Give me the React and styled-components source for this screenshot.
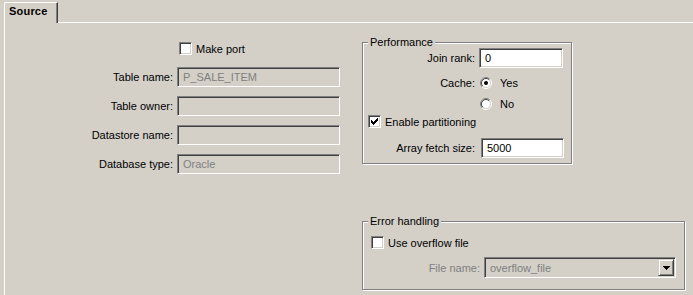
import React from "react";
import styled, { createGlobalStyle } from "styled-components";

const GlobalStyle = createGlobalStyle`
  html, body {
    margin: 0;
    padding: 0;
    background: #d4d0c8;
  }
  body {
    font-family: "Liberation Sans", Arial, sans-serif;
    font-size: 11px;
    color: #000;
  }
`;

const Window = styled.div`
  width: 693px;
  height: 295px;
  overflow: hidden;
  background: #d4d0c8;
  display: flex;
  flex-direction: column;
`;

const TabStrip = styled.div`
  display: flex;
  align-items: flex-end;
  height: 23px;
  flex-shrink: 0;
`;

const TabLead = styled.div`
  width: 4px;
`;

const Tab = styled.div`
  box-sizing: border-box;
  width: 54px;
  height: 21px;
  padding: 2px 0 0 4px;
  line-height: 13px;
  border-left: 1px solid #fff;
  border-top: 1px solid #fff;
  border-right: 1px solid #404040;
  border-top-left-radius: 2px;
  box-shadow: inset -1px 0 #808080;
  font-weight: bold;
  letter-spacing: 0.2px;
`;

const TabFiller = styled.div`
  flex: 1;
  height: 23px;
  box-sizing: border-box;
  border-bottom: 1px solid #fff;
`;

const Panel = styled.div`
  flex: 1;
  margin-left: 4px;
  border-left: 1px solid #fff;
  display: flex;
  align-items: flex-start;
  padding-top: 19px;
`;

const LeftCol = styled.div`
  display: flex;
  flex-direction: column;
  width: 336px;
`;

const RightCol = styled.div`
  display: flex;
  flex-direction: column;
  margin-left: 21px;
`;

const Row = styled.div`
  display: flex;
  align-items: center;
  height: ${(p) => p.$h || 20}px;
  margin-top: ${(p) => p.$mt || 0}px;
  padding-left: ${(p) => p.$pl || 0}px;
`;

const Label = styled.span`
  width: ${(p) => p.$w}px;
  flex-shrink: 0;
  text-align: right;
  margin-right: 4px;
  white-space: nowrap;
  color: ${(p) => (p.$disabled ? "#808080" : "#000")};
`;

const TextBox = styled.div`
  box-sizing: border-box;
  width: ${(p) => p.$w}px;
  height: 20px;
  margin-left: ${(p) => p.$ml || 0}px;
  padding-left: 5px;
  display: flex;
  align-items: center;
  border: 1px solid;
  border-color: #808080 #fff #fff #808080;
  box-shadow: inset 1px 1px #404040, inset -1px -1px #d4d0c8;
  background: ${(p) => (p.$disabled ? "#d4d0c8" : "#fff")};
  color: ${(p) => (p.$disabled ? "#808080" : "#000")};
  white-space: nowrap;
`;

const CheckBox = styled.div`
  box-sizing: border-box;
  width: 13px;
  height: 13px;
  flex-shrink: 0;
  border: 1px solid;
  border-color: #808080 #fff #fff #808080;
  box-shadow: inset 1px 1px #404040, inset -1px -1px #d4d0c8;
  background: #fff;
  display: flex;
  align-items: flex-start;
  justify-content: flex-start;
  padding: 2px 0 0 2px;
  margin-right: 4px;
`;

const RadioWrap = styled.span`
  display: inline-flex;
  align-items: center;
  margin-left: ${(p) => p.$ml || 0}px;
  svg {
    margin-right: 8px;
    flex-shrink: 0;
  }
`;

const Group = styled.div`
  position: relative;
  box-sizing: border-box;
  width: ${(p) => p.$w}px;
  height: ${(p) => p.$h}px;
  margin-top: ${(p) => p.$mt || 0}px;
  border: 1px solid #808080;
  box-shadow: inset 1px 1px #fff, 1px 1px #fff;
  padding-top: ${(p) => p.$pt || 0}px;
`;

const Legend = styled.span`
  position: absolute;
  top: -7px;
  left: 5px;
  padding: 0 2px;
  line-height: 13px;
  background: #d4d0c8;
`;

const Combo = styled.div`
  box-sizing: border-box;
  width: 192px;
  height: 21px;
  display: flex;
  align-items: center;
  padding: 1px 1px 1px 5px;
  border: 1px solid;
  border-color: #808080 #fff #fff #808080;
  box-shadow: inset 1px 1px #404040, inset -1px -1px #d4d0c8;
  background: #d4d0c8;
  color: #808080;
`;

const ComboText = styled.span`
  flex: 1;
`;

const ComboButton = styled.div`
  box-sizing: border-box;
  width: 16px;
  height: 17px;
  display: flex;
  align-items: center;
  justify-content: center;
  border: 1px solid;
  border-color: #d4d0c8 #404040 #404040 #d4d0c8;
  box-shadow: inset 1px 1px #fff, inset -1px -1px #808080;
`;

const CheckMark = () => (
  <svg width="7" height="7" viewBox="0 0 7 7" shapeRendering="crispEdges">
    {[2, 3, 4, 3, 2, 1, 0].map((top, i) => (
      <rect key={i} x={i} y={top} width="1" height="3" fill="#000" />
    ))}
  </svg>
);

const Check = ({ checked, children }) => (
  <>
    <CheckBox>{checked && <CheckMark />}</CheckBox>
    <span>{children}</span>
  </>
);

const Radio = ({ checked, children, ml }) => (
  <RadioWrap $ml={ml}>
    <svg width="12" height="12" viewBox="0 0 12 12">
      <circle cx="6" cy="6" r="5" fill="#fff" />
      <path d="M9.9 2.1 A5.5 5.5 0 0 0 2.1 9.9" stroke="#808080" fill="none" />
      <path d="M2.1 9.9 A5.5 5.5 0 0 0 9.9 2.1" stroke="#fff" fill="none" />
      <path d="M9.2 2.8 A4.5 4.5 0 0 0 2.8 9.2" stroke="#404040" fill="none" />
      <path d="M2.8 9.2 A4.5 4.5 0 0 0 9.2 2.8" stroke="#d4d0c8" fill="none" />
      {checked && <circle cx="6" cy="6" r="2" fill="#000" />}
    </svg>
    <span>{children}</span>
  </RadioWrap>
);

const ArrowDown = () => (
  <svg width="7" height="4" viewBox="0 0 7 4" shapeRendering="crispEdges">
    <rect x="0" y="0" width="7" height="1" fill="#000" />
    <rect x="1" y="1" width="5" height="1" fill="#000" />
    <rect x="2" y="2" width="3" height="1" fill="#000" />
    <rect x="3" y="3" width="1" height="1" fill="#000" />
  </svg>
);

const sourceFields = [
  { label: "Table name:", value: "P_SALE_ITEM" },
  { label: "Table owner:", value: "" },
  { label: "Datastore name:", value: "" },
  { label: "Database type:", value: "Oracle" },
];

export default function App() {
  return (
    <Window>
      <GlobalStyle />
      <TabStrip>
        <TabLead />
        <Tab>Source</Tab>
        <TabFiller />
      </TabStrip>
      <Panel>
        <LeftCol>
          <Row $h={13} $pl={174}>
            <Check>Make port</Check>
          </Row>
          {sourceFields.map((f, i) => (
            <Row key={f.label} $mt={i === 0 ? 12 : 9}>
              <Label $w={168}>{f.label}</Label>
              <TextBox $w={163} $disabled>
                {f.value}
              </TextBox>
            </Row>
          ))}
        </LeftCol>
        <RightCol>
          <Group $w={210} $h={122} $pt={5}>
            <Legend>Performance</Legend>
            <Row>
              <Label $w={112}>Join rank:</Label>
              <TextBox $w={84}>0</TextBox>
            </Row>
            <Row $h={12} $mt={9}>
              <Label $w={112}>Cache:</Label>
              <Radio checked ml={1}>
                Yes
              </Radio>
            </Row>
            <Row $h={12} $mt={9} $pl={117}>
              <Radio>No</Radio>
            </Row>
            <Row $h={13} $mt={5} $pl={5}>
              <Check checked>Enable partitioning</Check>
            </Row>
            <Row $mt={10}>
              <Label $w={112}>Array fetch size:</Label>
              <TextBox $w={83} $ml={2}>
                5000
              </TextBox>
            </Row>
          </Group>
          <Group $w={323} $h={69} $mt={57} $pt={14}>
            <Legend>Error handling</Legend>
            <Row $h={13} $pl={8}>
              <Check>Use overflow file</Check>
            </Row>
            <Row $h={21} $mt={8}>
              <Label $w={117} $disabled>
                File name:
              </Label>
              <Combo>
                <ComboText>overflow_file</ComboText>
                <ComboButton>
                  <ArrowDown />
                </ComboButton>
              </Combo>
            </Row>
          </Group>
        </RightCol>
      </Panel>
    </Window>
  );
}
